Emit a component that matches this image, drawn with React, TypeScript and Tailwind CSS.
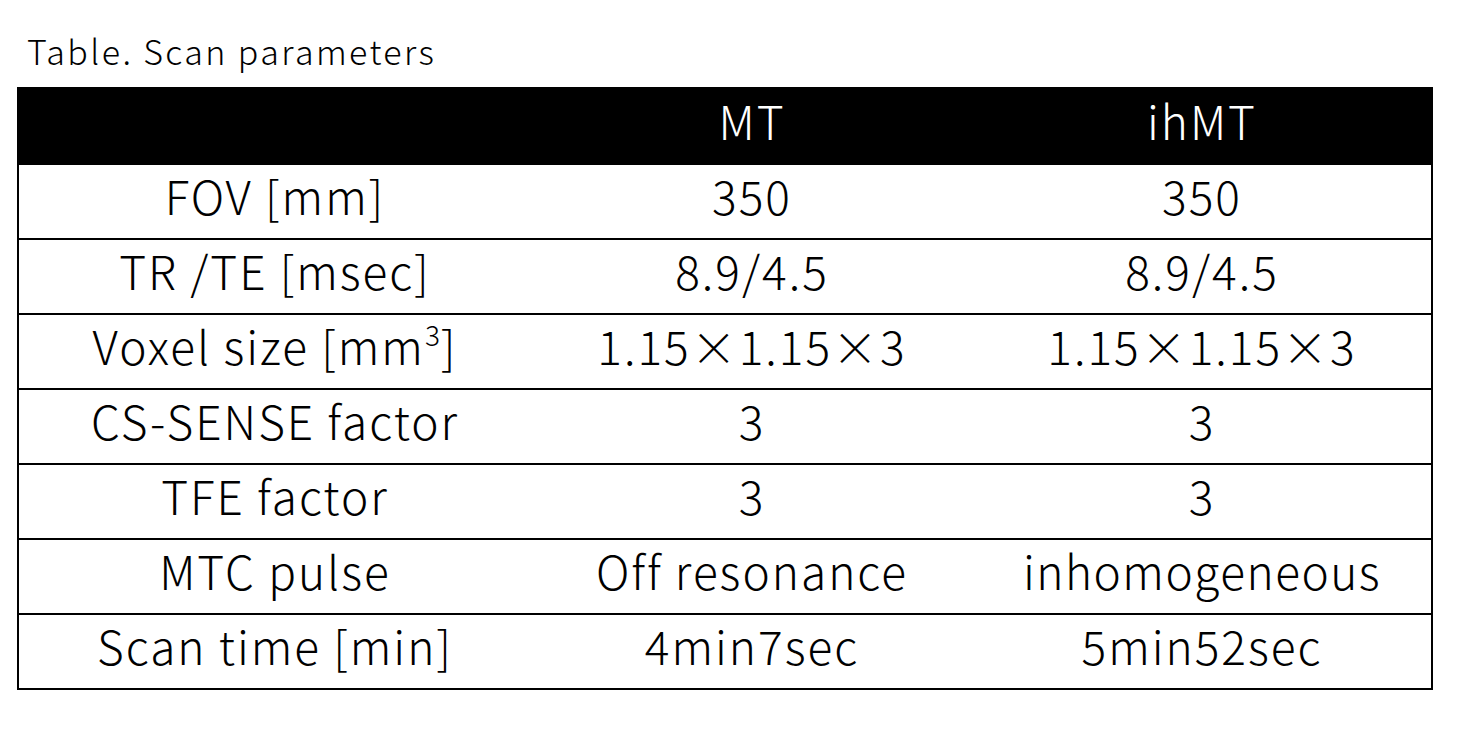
import React from "react";

const rows: [React.ReactNode, string, string][] = [
  ["FOV [mm]", "350", "350"],
  ["TR /TE [msec]", "8.9/4.5", "8.9/4.5"],
  [
    <>
      Voxel size [mm<sup className="text-[28px] relative -top-[19px] align-baseline tracking-[1px]">3</sup>]
    </>,
    "1.15×1.15×3",
    "1.15×1.15×3",
  ],
  ["CS-SENSE factor", "3", "3"],
  ["TFE factor", "3", "3"],
  ["MTC pulse", "Off resonance", "inhomogeneous"],
  ["Scan time [min]", "4min7sec", "5min52sec"],
];

export default function App() {
  const font = { fontFamily: '"Noto Sans CJK JP", "Noto Sans", sans-serif' };
  return (
    <div className="w-[1463px] h-[735px] bg-white text-black" style={font}>
      <div className="pt-[31px] pl-[27px] text-[34px] leading-[40px] font-light tracking-[2.4px]">Table. Scan parameters</div>
      <div className="ml-[17px] mt-[16px] w-[1416px] border-2 border-black">
        <div className="grid grid-cols-[512px_442px_458px] h-[74px] pb-[12px] bg-black text-white text-[46px] font-light tracking-[2px] items-center text-center leading-none">
          <div></div>
          <div>MT</div>
          <div>ihMT</div>
        </div>
        {rows.map((r, i) => (
          <div
            key={i}
            className="grid grid-cols-[512px_442px_458px] h-[75px] pb-[14px] border-t-2 border-black text-[46px] font-light tracking-[2px] items-center text-center leading-none"
          >
            <div>{r[0]}</div>
            <div>{r[1]}</div>
            <div className={i === 5 ? "tracking-[1.5px]" : ""}>{r[2]}</div>
          </div>
        ))}
      </div>
    </div>
  );
}
